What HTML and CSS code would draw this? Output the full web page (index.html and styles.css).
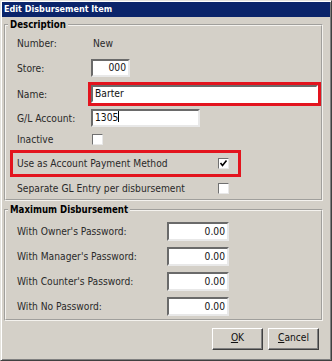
FILE: index.html
```html
<!DOCTYPE html>
<html>
<head>
<meta charset="utf-8">
<link rel="stylesheet" href="styles.css">
</head>
<body>
<div class="window">
  <div class="titlebar">Edit Disbursement Item</div>
  <div class="client">
    <fieldset class="group group-desc">
      <legend>Description</legend>
      <div class="rows">
        <div class="row r1"><span class="lbl">Number:</span><span class="value">New</span></div>
        <div class="row r2"><span class="lbl">Store:</span><div class="input store">000</div></div>
        <div class="row r3"><span class="lbl name-lbl">Name:</span><div class="highlight name-hl"><div class="input name">Barter</div></div></div>
        <div class="row r4"><span class="lbl">G/L Account:</span><div class="input gl">1305<span class="caret"></span></div></div>
        <div class="row r5"><span class="lbl">Inactive</span><span class="check"></span></div>
        <div class="row r6 highlight use-hl"><span class="lbl wide">Use as Account Payment Method</span><span class="check"><svg width="9" height="9" viewBox="0 0 9 9"><polyline points="1.5,4 3.5,6.5 7.5,1.5" fill="none" stroke="#000" stroke-width="1.6"/></svg></span></div>
        <div class="row r7"><span class="lbl wide">Separate GL Entry per disbursement</span><span class="check"></span></div>
      </div>
    </fieldset>
    <fieldset class="group group-max">
      <legend>Maximum Disbursement</legend>
      <div class="rows">
        <div class="row mrow"><span class="lbl mlbl">With Owner's Password:</span><div class="input amt">0.00</div></div>
        <div class="row mrow"><span class="lbl mlbl">With Manager's Password:</span><div class="input amt">0.00</div></div>
        <div class="row mrow"><span class="lbl mlbl">With Counter's Password:</span><div class="input amt">0.00</div></div>
        <div class="row mrow"><span class="lbl mlbl">With No Password:</span><div class="input amt">0.00</div></div>
      </div>
    </fieldset>
    <div class="buttons">
      <div class="btn"><u>O</u>K</div>
      <div class="btn"><u>C</u>ancel</div>
    </div>
  </div>
</div>
</body>
</html>
```

FILE: styles.css
```css
html, body {
  margin: 0;
  padding: 0;
  background: #d4d0c8;
}
body {
  font-family: "DejaVu Sans Condensed", "Liberation Sans", sans-serif;
  font-size: 10.2px;
  color: #2a2a2a;
}
.window {
  box-sizing: border-box;
  width: 332px;
  height: 361px;
  background: #d4d0c8;
  border: 1px solid;
  border-color: #e4e2dc #404040 #404040 #e4e2dc;
  box-shadow: inset 1px 1px 0 #fff, inset -1px -1px 0 #808080;
  padding: 1px;
}
.titlebar {
  height: 15px;
  line-height: 15px;
  background: #0a246a;
  color: #fff;
  font-weight: bold;
  font-size: 9px;
  padding-left: 2px;
}
.client {
  padding: 1px 7px 0 2px;
}
.group {
  margin: 0;
  padding: 0;
  min-width: 0;
  border: 2px groove #f4f2ee;
}
.group legend {
  margin-left: 2px;
  padding: 0 2px;
  font-weight: bold;
  font-size: 9.6px;
  line-height: 13px;
  color: #000;
}
.group-max {
  margin-top: 2px;
}
.rows {
  display: flex;
  flex-direction: column;
  padding-left: 11px;
}
.row {
  display: flex;
  align-items: center;
}
.lbl {
  width: 74px;
  flex: none;
  white-space: nowrap;
}
.lbl.wide {
  width: 201px;
}
.lbl.name-lbl {
  width: 71px;
}
.lbl.mlbl {
  width: 150px;
}
.value {
  padding-left: 2px;
}
.r1 { height: 24px; }
.r2 { height: 26px; }
.r3 { height: 26px; }
.r4 { height: 22px; }
.r5 { height: 21px; }
.r6 { height: 27px; }
.r7 { height: 22px; }
.mrow { height: 25px; }
.group-max .rows { padding-top: 3px; }

.input {
  box-sizing: border-box;
  background: #fff;
  border: 2px solid;
  border-color: #6a6a6a #e8e8e8 #e8e8e8 #6a6a6a;
  height: 18px;
  line-height: 14px;
  padding: 0 2px;
  color: #111;
  white-space: nowrap;
}
.store {
  width: 39px;
  text-align: right;
}
.gl {
  width: 109px;
}
.caret {
  display: inline-block;
  width: 1px;
  height: 11px;
  background: #000;
  vertical-align: -1px;
}
.amt {
  width: 62px;
  height: 19px;
  line-height: 15px;
  text-align: right;
}
.highlight {
  box-sizing: border-box;
  border: 3px solid #e3141e;
}
.name-hl {
  width: 235px;
  height: 24px;
}
.name-hl .name {
  width: 100%;
  height: 18px;
  border-right-color: #fff;
  border-bottom-color: #fff;
}
.use-hl {
  margin-left: -7px;
  padding-left: 4px;
  width: 231px;
}
.check {
  box-sizing: border-box;
  width: 11px;
  height: 11px;
  background: #fff;
  border: 1px solid;
  border-color: #707070 #e8e8e8 #e8e8e8 #707070;
  display: flex;
  align-items: center;
  justify-content: center;
  flex: none;
}
.r5 .check { margin-left: 1px; }
.buttons {
  display: flex;
  justify-content: flex-end;
  gap: 5px;
  margin-top: 7px;
  padding-right: 4px;
}
.btn {
  box-sizing: border-box;
  width: 51px;
  height: 22px;
  line-height: 18px;
  text-align: center;
  border: 1px solid;
  border-color: #fff #404040 #404040 #fff;
  box-shadow: inset -1px -1px 0 #808080;
  color: #111;
}
.btn u {
  text-decoration: underline;
}
```
